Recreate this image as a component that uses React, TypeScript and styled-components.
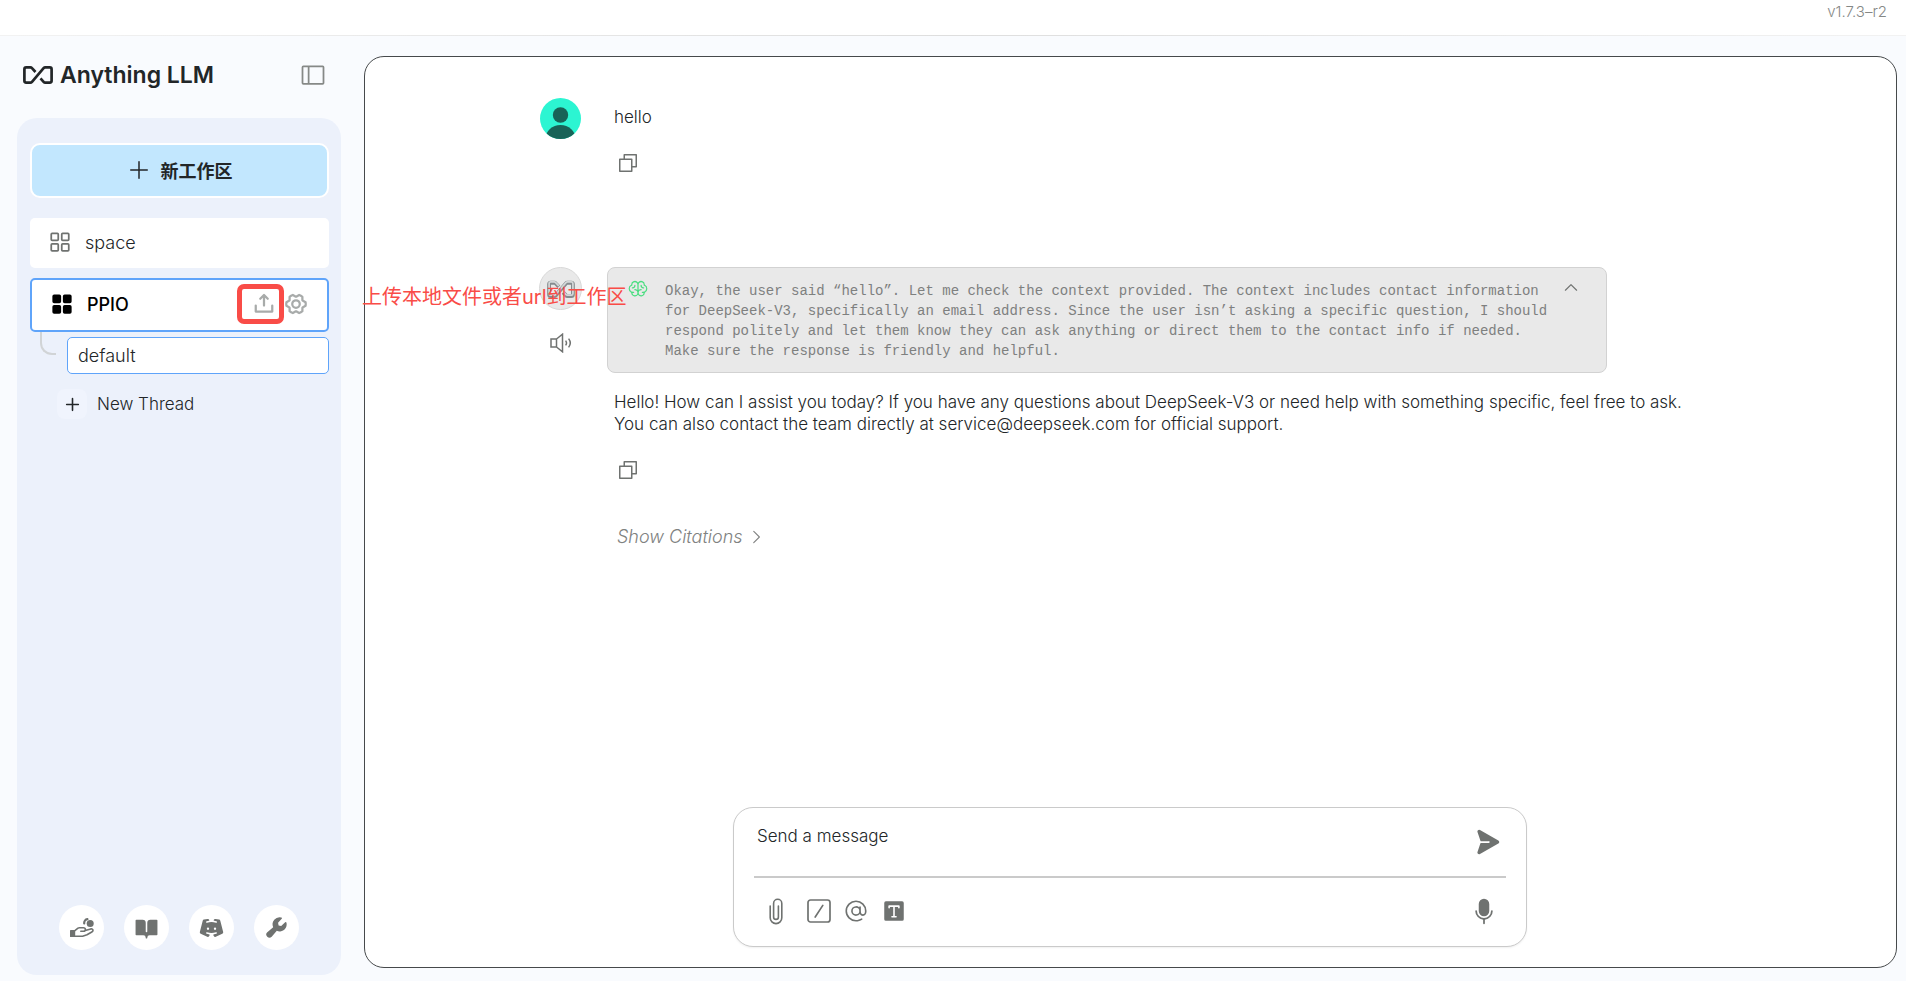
import React from "react";
import styled, { createGlobalStyle, css } from "styled-components";
import {
  PiAt,
  PiBookOpenFill,
  PiBrain,
  PiCaretRight,
  PiCaretUp,
  PiCopy,
  PiDiscordLogoFill,
  PiGearSixBold,
  PiMicrophoneFill,
  PiPaperPlaneRightFill,
  PiPlus,
  PiPlusBold,
  PiSidebarSimple,
  PiSquaresFour,
  PiSquaresFourFill,
  PiTextTFill,
  PiUploadSimpleBold,
  PiWrenchFill,
} from "react-icons/pi";

const GlobalStyle = createGlobalStyle`
  *, *::before, *::after { box-sizing: border-box; }
  body {
    margin: 0;
    background: #f9fbfe;
    color: #222628;
    font-family: Inter, "Noto Sans CJK SC", sans-serif;
    font-size: 17px;
    font-weight: 300;
  }
  button, input, textarea { font: inherit; color: inherit; }
  svg { display: block; flex: none; }
`;

const iconColor = "#6f7270";

const Page = styled.div`
  display: flex;
  flex-direction: column;
  min-height: 100vh;
`;

const TopBar = styled.header`
  display: flex;
  justify-content: flex-end;
  height: 36px;
  padding: 2px 19px 0 0;
  background:
    linear-gradient(90deg, #f2f2f2, #dedede 50%, #f2f2f2) bottom / 100% 1px no-repeat,
    #fff;
  color: #858886;
  font-size: 15px;
  line-height: 20px;
`;

const Body = styled.div`
  display: flex;
  flex: 1;
`;

const Sidebar = styled.aside`
  display: flex;
  flex-direction: column;
  flex: none;
  width: 364px;
  padding: 20px 23px 6px 17px;
`;

const Brand = styled.div`
  display: flex;
  align-items: center;
  height: 38px;
  margin-bottom: 24px;
  padding: 0 14px 0 6px;
  gap: 7px;
`;

const BrandName = styled.h1`
  flex: 1;
  margin: 0;
  font-size: 23px;
  font-weight: 600;
  line-height: 32px;
`;

const IconButton = styled.button<{ $color?: string }>`
  display: flex;
  align-items: center;
  justify-content: center;
  padding: 0;
  border: 0;
  background: none;
  color: ${(p) => p.$color ?? iconColor};
  cursor: pointer;
`;

const SidePanel = styled.nav`
  display: flex;
  flex: 1;
  flex-direction: column;
  padding: 25px 12px 25px 13px;
  border-radius: 20px;
  background: #ecf1fb;
`;

const NewWorkspace = styled.button`
  display: flex;
  align-items: center;
  justify-content: center;
  gap: 10px;
  height: 55px;
  padding: 0 0 2px;
  border: 2px solid #fff;
  border-radius: 10px;
  background: #c2e7fe;
  font-size: 18px;
  font-weight: 700;
  cursor: pointer;
`;

const Workspace = styled.div<{ $active?: boolean }>`
  display: flex;
  align-items: center;
  height: 50px;
  margin-top: 20px;
  padding: 0 20px 2px 16px;
  border-radius: 5px;
  background: #fff;
  color: #222628;
  font-size: 18px;
  ${(p) =>
    p.$active &&
    css`
      height: 54px;
      margin-top: 10px;
      padding: 0 19px 2px 16px;
      border: 2px solid #5fa4fa;
      color: #000;
      font-weight: 500;
    `}
`;

const WorkspaceLink = styled.a`
  display: flex;
  flex: 1;
  align-items: center;
  gap: 11px;
  color: inherit;
  text-decoration: none;
`;

const Actions = styled.div`
  display: flex;
  align-items: center;
  gap: 8px;
`;

const UploadSlot = styled.div`
  position: relative;
`;

const Highlight = styled.span`
  position: absolute;
  inset: -8px -8px -8px -15px;
  border: 5px solid #f94c47;
  border-radius: 7px;
  pointer-events: none;
`;

const Threads = styled.div`
  display: flex;
  flex-direction: column;
  padding-left: 10px;
`;

const ThreadRow = styled.div`
  display: flex;
  align-items: flex-start;
`;

const Branch = styled.span`
  width: 16px;
  height: 23px;
  margin-right: 11px;
  border: solid #d1d4d6;
  border-width: 0 0 2px 2px;
  border-bottom-left-radius: 12px;
`;

const Thread = styled.a`
  flex: 1;
  height: 37px;
  margin-top: 5px;
  padding: 0 10px;
  border: 1px solid #5fa4fa;
  border-radius: 5px;
  background: #fff;
  color: inherit;
  font-size: 18px;
  line-height: 35px;
  text-decoration: none;
`;

const NewThread = styled.button`
  display: flex;
  align-items: center;
  gap: 10px;
  margin-top: 15px;
  padding: 0 0 0 17px;
  border: 0;
  background: none;
  cursor: pointer;
`;

const PlusTile = styled.span`
  display: flex;
  align-items: center;
  justify-content: center;
  width: 30px;
  height: 30px;
  border-radius: 8px;
  background: #f0f4fd;
`;

const FooterLinks = styled.div`
  display: flex;
  gap: 20px;
  margin-top: auto;
  padding-left: 29px;
`;

const RoundLink = styled.a`
  display: flex;
  align-items: center;
  justify-content: center;
  width: 45px;
  height: 45px;
  border-radius: 50%;
  background: #fff;
  color: ${iconColor};
`;

const Chat = styled.main`
  position: relative;
  display: flex;
  flex: 1;
  flex-direction: column;
  align-items: center;
  justify-content: space-between;
  margin: 20px 9px 13px 0;
  padding: 41px 25px 20px 24px;
  border: 1px solid #46494b;
  border-radius: 20px;
  background: #fff;
`;

const History = styled.div`
  display: flex;
  flex-direction: column;
  gap: 92px;
  width: 100%;
  max-width: 1182px;
`;

const Message = styled.article`
  display: flex;
  gap: 25px;
`;

const AvatarColumn = styled.div`
  display: flex;
  flex: none;
  flex-direction: column;
  align-items: center;
  gap: 23px;
  width: 43px;
`;

const Content = styled.div`
  display: flex;
  flex: 1;
  flex-direction: column;
  align-items: flex-start;
`;

const Text = styled.p`
  max-width: 1106px;
  margin: 0;
  padding: 8px 0 0 7px;
  line-height: 22px;
`;

const CopyButton = styled(IconButton)`
  margin: 23px 0 0 9px;
`;

const BotAvatar = styled.div`
  display: flex;
  align-items: center;
  justify-content: center;
  width: 43px;
  height: 43px;
  border: 1px solid #d8d8d8;
  border-radius: 50%;
  background: #e9e9e9;
`;

const Thought = styled.section`
  display: flex;
  align-items: flex-start;
  width: 100%;
  max-width: 1000px;
  margin-bottom: 10px;
  padding: 11px 26px 11px 20px;
  border: 1px solid #d2d2d2;
  border-radius: 8px;
  background: #e9e9e9;
  color: #7e807f;
`;

const ThoughtText = styled.p`
  flex: 1;
  margin: 0;
  padding: 2px 12px 0 17px;
  font-family: "Liberation Mono", monospace;
  font-size: 14px;
  font-weight: 400;
  line-height: 20px;
`;

const Citations = styled.button`
  display: flex;
  align-items: center;
  gap: 4px;
  margin: 43px 0 0 10px;
  padding: 0;
  border: 0;
  background: none;
  color: #808281;
  font-size: 18px;
  font-style: italic;
  line-height: 24px;
  cursor: pointer;
`;

const Composer = styled.form`
  width: 100%;
  max-width: 794px;
  height: 140px;
  padding: 10px 20px;
  border: 1px solid #cacaca;
  border-radius: 20px;
  background: #fff;
  box-shadow: 0 1px 2px rgba(0, 0, 0, 0.06);
`;

const PromptRow = styled.div`
  display: flex;
  align-items: flex-start;
  height: 60px;
  padding: 7px 5px 0 3px;
  border-bottom: 2px solid #cacaca;
`;

const Prompt = styled.textarea`
  flex: 1;
  height: 24px;
  padding: 0;
  border: 0;
  outline: 0;
  background: none;
  line-height: 22px;
  resize: none;
  &::placeholder { color: #222628; opacity: 1; }
`;

const SendButton = styled(IconButton)`
  height: 34px;
`;

const Tools = styled.div`
  display: flex;
  align-items: center;
  height: 66px;
  padding: 0 8px 0 3px;
  gap: 12px;
`;

const AttachButton = styled(IconButton)`
  width: 38px;
`;

const Spacer = styled.span`
  flex: 1;
`;

const Annotation = styled.span`
  position: absolute;
  top: 226px;
  left: -3px;
  color: #f94c47;
  font-size: 20px;
  font-weight: 400;
  line-height: 28px;
  white-space: nowrap;
`;

const logoPath =
  "M12.5 6 9 2.2Q8.3 1.4 7.3 1.4H3.2Q1.4 1.4 1.4 3.2V14.8Q1.4 16.6 3.2 16.6H7.3Q8.3 16.6 9 15.8L20.6 2.2Q21.3 1.4 22.3 1.4H26.8Q28.6 1.4 28.6 3.2V14.8Q28.6 16.6 26.8 16.6H22.3Q21.3 16.6 20.6 15.8L17.5 12.4";

const Logo = () => (
  <svg width="30" height="18" viewBox="0 0 30 18" fill="none" stroke="#222628" strokeWidth="2.7">
    <path d={logoPath} />
  </svg>
);

const MetalLogo = () => (
  <svg width="28" height="20" viewBox="-1 -1 32 21" fill="none">
    <path d={logoPath} stroke="#858b8e" strokeWidth="4.4" transform="translate(0 1)" />
    <path d={logoPath} stroke="#d3d7d8" strokeWidth="2" />
  </svg>
);

const UserAvatar = () => (
  <svg width="41" height="41" viewBox="0 0 41 41">
    <defs>
      <clipPath id="avatar-disc">
        <circle cx="20.5" cy="20.5" r="20.5" />
      </clipPath>
    </defs>
    <g clipPath="url(#avatar-disc)">
      <rect width="41" height="41" fill="#2cf5d2" />
      <circle cx="20.5" cy="17" r="7.7" fill="#186357" />
      <ellipse cx="20.5" cy="41" rx="15" ry="14" fill="#186357" />
    </g>
  </svg>
);

const Speaker = () => (
  <svg width="22" height="20" viewBox="0 0 22 20" fill="none" stroke="currentColor" strokeWidth="1.5">
    <path d="M1 6H6.5V14H1ZM6.5 6 12.5 1.2V18.8L6.5 14" />
    <path d="M15.6 7.6Q17.4 10 15.6 12.4M18.6 5.6Q22 10 18.6 14.4" />
  </svg>
);

const HandCoins = () => (
  <svg width="24" height="20" viewBox="0 0 24 20" fill="none" stroke="currentColor" strokeWidth="1.6" strokeLinejoin="round" strokeLinecap="round">
    <path d="M0 12.6Q0 12 .6 12H5.2V19H.6Q0 19 0 18.4Z" fill="currentColor" stroke="none" />
    <path d="M5.2 12.4 8 10.2Q8.6 9.8 9.4 9.8H13.4Q15.4 9.8 15.4 11.5T13.4 13.3H10.8M15.2 12.4 20.8 10.9Q22.8 10.6 23 12.2 23 13.4 21.8 14L17 16.8 12.6 18.2H5.2" />
    <circle cx="20.2" cy="5.6" r="3.5" fill="currentColor" stroke="none" />
    <path d="M17.4 1.2A3.8 3.8 0 0 0 14.2 5.4" strokeWidth="2.2" />
  </svg>
);

const Paperclip = () => (
  <svg width="14" height="27" viewBox="0 0 14 27" fill="none" stroke="currentColor" strokeWidth="1.6" strokeLinecap="round">
    <path d="M1.2 8V19.8a5.8 5.8 0 0 0 11.6 0V5.4a4.1 4.1 0 0 0-8.2 0V19a2.4 2.4 0 0 0 4.8 0V8" />
  </svg>
);

const SlashBox = () => (
  <svg width="24" height="24" viewBox="0 0 24 24" fill="none" stroke="currentColor" strokeWidth="1.7" strokeLinecap="round">
    <rect x="1" y="1" width="22" height="22" rx="2.5" />
    <path d="M8.2 18 15.8 6.4" />
  </svg>
);

export default function App() {
  return (
    <Page>
      <GlobalStyle />
      <TopBar>v1.7.3–r2</TopBar>
      <Body>
        <Sidebar>
          <Brand>
            <Logo />
            <BrandName>Anything LLM</BrandName>
            <IconButton aria-label="Toggle sidebar" $color="#868987">
              <PiSidebarSimple size={28} />
            </IconButton>
          </Brand>
          <SidePanel>
            <NewWorkspace>
              <PiPlus size={24} />
              新工作区
            </NewWorkspace>
            <Workspace>
              <WorkspaceLink href="#space">
                <PiSquaresFour size={28} color={iconColor} />
                space
              </WorkspaceLink>
            </Workspace>
            <Workspace $active>
              <WorkspaceLink href="#ppio">
                <PiSquaresFourFill size={28} />
                PPIO
              </WorkspaceLink>
              <Actions>
                <UploadSlot>
                  <IconButton aria-label="Upload" $color="#a8abaa">
                    <PiUploadSimpleBold size={24} />
                  </IconButton>
                  <Highlight />
                </UploadSlot>
                <IconButton aria-label="Settings" $color="#a8abaa">
                  <PiGearSixBold size={24} />
                </IconButton>
              </Actions>
            </Workspace>
            <Threads>
              <ThreadRow>
                <Branch />
                <Thread href="#default">default</Thread>
              </ThreadRow>
              <NewThread>
                <PlusTile>
                  <PiPlusBold size={17} />
                </PlusTile>
                New Thread
              </NewThread>
            </Threads>
            <FooterLinks>
              <RoundLink href="#support" aria-label="Support">
                <HandCoins />
              </RoundLink>
              <RoundLink href="#docs" aria-label="Docs">
                <PiBookOpenFill size={25} />
              </RoundLink>
              <RoundLink href="#discord" aria-label="Discord">
                <PiDiscordLogoFill size={25} />
              </RoundLink>
              <RoundLink href="#settings" aria-label="Settings">
                <PiWrenchFill size={25} />
              </RoundLink>
            </FooterLinks>
          </SidePanel>
        </Sidebar>
        <Chat>
          <History>
            <Message>
              <AvatarColumn>
                <UserAvatar />
              </AvatarColumn>
              <Content>
                <Text>hello</Text>
                <CopyButton aria-label="Copy">
                  <PiCopy size={24} />
                </CopyButton>
              </Content>
            </Message>
            <Message>
              <AvatarColumn>
                <BotAvatar>
                  <MetalLogo />
                </BotAvatar>
                <IconButton aria-label="Read aloud">
                  <Speaker />
                </IconButton>
              </AvatarColumn>
              <Content>
                <Thought>
                  <PiBrain size={20} color="#4ade80" />
                  <ThoughtText>
                    Okay, the user said “hello”. Let me check the context provided. The context includes contact information
                    for DeepSeek-V3, specifically an email address. Since the user isn’t asking a specific question, I should
                    respond politely and let them know they can ask anything or direct them to the contact info if needed.
                    Make sure the response is friendly and helpful.
                  </ThoughtText>
                  <IconButton aria-label="Collapse">
                    <PiCaretUp size={18} />
                  </IconButton>
                </Thought>
                <Text>
                  Hello! How can I assist you today? If you have any questions about DeepSeek-V3 or need help with
                  something specific, feel free to ask. You can also contact the team directly at
                  service@deepseek.com for official support.
                </Text>
                <CopyButton aria-label="Copy">
                  <PiCopy size={24} />
                </CopyButton>
                <Citations>
                  Show Citations
                  <PiCaretRight size={18} />
                </Citations>
              </Content>
            </Message>
          </History>
          <Composer>
            <PromptRow>
              <Prompt aria-label="Message" placeholder="Send a message" />
              <SendButton type="button" aria-label="Send">
                <PiPaperPlaneRightFill size={28} />
              </SendButton>
            </PromptRow>
            <Tools>
              <AttachButton type="button" aria-label="Attach file">
                <Paperclip />
              </AttachButton>
              <IconButton type="button" aria-label="Slash commands">
                <SlashBox />
              </IconButton>
              <IconButton type="button" aria-label="Agents">
                <PiAt size={26} />
              </IconButton>
              <IconButton type="button" aria-label="Text size">
                <PiTextTFill size={26} />
              </IconButton>
              <Spacer />
              <IconButton type="button" aria-label="Dictate">
                <PiMicrophoneFill size={28} />
              </IconButton>
            </Tools>
          </Composer>
          <Annotation>上传本地文件或者url到工作区</Annotation>
        </Chat>
      </Body>
    </Page>
  );
}
